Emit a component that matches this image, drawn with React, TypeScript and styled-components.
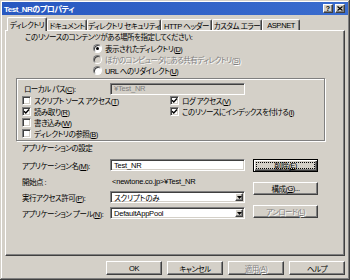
import React from 'react'
import styled, { createGlobalStyle, css } from 'styled-components'

const GlobalStyle = createGlobalStyle`
  html, body {
    margin: 0;
    padding: 0;
    background: #d4d0c8;
  }
  body {
    font-family: "Liberation Sans", "Noto Sans CJK JP", sans-serif;
    font-size: 7.5px;
    letter-spacing: -0.5px;
    font-feature-settings: "palt";
    font-variant-east-asian: proportional-width;
    color: #000;
  }
`

const tabs = [
	{ label: 'ディレクトリ', width: 40, active: true },
	{ label: 'ドキュメント', width: 40 },
	{ label: 'ディレクトリ セキュリティ', width: 74 },
	{ label: 'HTTP ヘッダー', width: 51 },
	{ label: 'カスタム エラー', width: 50 },
	{ label: 'ASP.NET', width: 38 },
]

const Key: React.FC<{ k: string }> = ({ k }) => (
	<>
		(<u>{k}</u>)
	</>
)

const CheckMark = () => (
	<svg width="7" height="7" viewBox="0 0 7 7">
		<path d="M1 3.2 L2.8 5 L6 1.6" stroke="#000" strokeWidth="1.4" fill="none" />
	</svg>
)

const Arrow = () => (
	<svg width="5" height="3" viewBox="0 0 5 3">
		<path d="M0 0 H5 L2.5 3 Z" fill="#000" />
	</svg>
)

const App: React.FC = () => {
	return (
		<>
			<GlobalStyle />
			<Window>
				<TitleBar>
					<Title>Test_NRのプロパティ</Title>
					<CaptionButton>?</CaptionButton>
					<CaptionButton>
						<svg width="6" height="5" viewBox="0 0 6 5">
							<path d="M0.5 0.5 L5.5 4.5 M5.5 0.5 L0.5 4.5" stroke="#000" strokeWidth="1.2" />
						</svg>
					</CaptionButton>
				</TitleBar>

				<Body>
					<TabStrip>
						{tabs.map((t) => (
							<Tab key={t.label} $width={t.width} $active={!!t.active}>
								{t.label}
							</Tab>
						))}
					</TabStrip>

					<Panel>
						<Prompt>このリソースのコンテンツがある場所を指定してください:</Prompt>
						<RadioList>
							<RadioRow>
								<Radio $checked />
								<span>
									表示されたディレクトリ<Key k="D" />
								</span>
							</RadioRow>
							<RadioRow $disabled>
								<Radio $disabled />
								<span>
									ほかのコンピュータにある共有ディレクトリ<Key k="S" />
								</span>
							</RadioRow>
							<RadioRow>
								<Radio />
								<span>
									URL へのリダイレクト<Key k="U" />
								</span>
							</RadioRow>
						</RadioList>

						<GroupBox>
							<PathRow>
								<PathLabel>
									ローカル パス<Key k="C" />:
								</PathLabel>
								<Field $disabled>¥Test_NR</Field>
							</PathRow>
							<CheckGrid>
								<CheckItem>
									<CheckBox />
									<span>
										スクリプト ソース アクセス<Key k="T" />
									</span>
								</CheckItem>
								<CheckItem>
									<CheckBox>
										<CheckMark />
									</CheckBox>
									<span>
										読み取り<Key k="R" />
									</span>
								</CheckItem>
								<CheckItem>
									<CheckBox />
									<span>
										書き込み<Key k="W" />
									</span>
								</CheckItem>
								<CheckItem>
									<CheckBox />
									<span>
										ディレクトリの参照<Key k="B" />
									</span>
								</CheckItem>
								<CheckItem>
									<CheckBox>
										<CheckMark />
									</CheckBox>
									<span>
										ログ アクセス<Key k="V" />
									</span>
								</CheckItem>
								<CheckItem>
									<CheckBox>
										<CheckMark />
									</CheckBox>
									<span>
										このリソースにインデックスを付ける<Key k="I" />
									</span>
								</CheckItem>
							</CheckGrid>
						</GroupBox>

						<SectionTitle>アプリケーションの設定</SectionTitle>

						<AppSection>
							<AppRows>
								<AppRow>
									<AppLabel>
										アプリケーション名<Key k="M" />:
									</AppLabel>
									<Field>Test_NR</Field>
								</AppRow>
								<AppRow>
									<AppLabel>開始点 :</AppLabel>
									<StaticText>&lt;newtone.co.jp&gt;¥Test_NR</StaticText>
								</AppRow>
								<AppRow>
									<AppLabel>
										実行アクセス許可<Key k="P" />:
									</AppLabel>
									<Field>
										<FieldText>スクリプトのみ</FieldText>
										<DropButton>
											<Arrow />
										</DropButton>
									</Field>
								</AppRow>
								<AppRow>
									<AppLabel>
										アプリケーション プール<Key k="N" />:
									</AppLabel>
									<Field>
										<FieldText>DefaultAppPool</FieldText>
										<DropButton>
											<Arrow />
										</DropButton>
									</Field>
								</AppRow>
							</AppRows>
							<SideButtons>
								<Button $w={65} $default>
									<FocusRing>
										削除<Key k="E" />
									</FocusRing>
								</Button>
								<Button $w={65}>
									構成<Key k="G" />...
								</Button>
								<Button $w={65} disabled>
									アンロード<Key k="L" />
								</Button>
							</SideButtons>
						</AppSection>
					</Panel>

					<ButtonBar>
						<Button $w={56} $h={14}>OK</Button>
						<Button $w={56} $h={14}>キャンセル</Button>
						<Button $w={56} $h={14} disabled>
							適用<Key k="A" />
						</Button>
						<Button $w={56} $h={14}>ヘルプ</Button>
					</ButtonBar>
				</Body>
			</Window>
		</>
	)
}

const raised = css`
	border: 1px solid;
	border-color: #fff #404040 #404040 #fff;
	box-shadow: inset -1px -1px #808080;
`

const sunken = css`
	border: 1px solid;
	border-color: #808080 #fff #fff #808080;
	box-shadow: inset 1px 1px #404040, inset -1px -1px #d4d0c8;
`

const disabledText = css`
	color: #808080;
	text-shadow: 1px 1px #fff;
`

const Window = styled.div`
	width: 350px;
	height: 280px;
	box-sizing: border-box;
	padding: 2px;
	background: #d4d0c8;
	box-shadow: inset -1px -1px #404040, inset 1px 1px #d4d0c8, inset -2px -2px #808080, inset 2px 2px #fff;
	display: flex;
	flex-direction: column;
`

const TitleBar = styled.div`
	height: 13px;
	flex: none;
	display: flex;
	align-items: center;
	gap: 2px;
	padding: 0 3px 0 2px;
	background: linear-gradient(to right, #2858c0, #3a6cce);
`

const Title = styled.div`
	flex: 1;
	color: #fff;
	font-weight: bold;
	font-size: 8px;
	white-space: nowrap;
`

const CaptionButton = styled.div`
	width: 10px;
	height: 9px;
	box-sizing: border-box;
	background: #d4d0c8;
	${raised};
	display: flex;
	align-items: center;
	justify-content: center;
	font-size: 7px;
	font-weight: bold;
	line-height: 1;
	letter-spacing: 0;
`

const Body = styled.div`
	display: flex;
	flex-direction: column;
	padding: 0 3px 0 3px;
`

const TabStrip = styled.div`
	margin-top: 2px;
	height: 13px;
	display: flex;
	align-items: flex-end;
	padding-left: 2px;
`

const Tab = styled.div<{ $width: number; $active: boolean }>`
	width: ${(p) => p.$width}px;
	height: ${(p) => (p.$active ? 14 : 11)}px;
	box-sizing: border-box;
	flex: none;
	overflow: hidden;
	background: #d4d0c8;
	border-left: 1px solid #fff;
	border-top: 1px solid #fff;
	border-right: 1px solid #404040;
	border-radius: 2px 2px 0 0;
	box-shadow: inset -1px 0 #808080;
	display: flex;
	align-items: center;
	justify-content: center;
	white-space: nowrap;
	padding-bottom: ${(p) => (p.$active ? 1 : 0)}px;
	${(p) =>
		p.$active &&
		css`
			margin-bottom: -1px;
			position: relative;
			z-index: 1;
		`}
`

const Panel = styled.div`
	height: 226px;
	box-sizing: border-box;
	${raised};
	padding: 1px 19px 0 10px;
	display: flex;
	flex-direction: column;
`

const Prompt = styled.div`
	height: 10px;
	line-height: 10px;
	margin: 1px 0 0 9px;
	white-space: nowrap;
`

const RadioList = styled.div`
	display: flex;
	flex-direction: column;
	padding-left: 77px;
`

const RadioRow = styled.div<{ $disabled?: boolean }>`
	height: 11px;
	display: flex;
	align-items: center;
	gap: 3px;
	white-space: nowrap;
	${(p) => p.$disabled && disabledText};
`

const Radio = styled.span<{ $checked?: boolean; $disabled?: boolean }>`
	width: 9px;
	height: 9px;
	box-sizing: border-box;
	flex: none;
	border-radius: 50%;
	border: 1px solid;
	border-color: #808080 #fff #fff #808080;
	box-shadow: inset 1px 1px #404040;
	background: ${(p) => (p.$disabled ? '#d4d0c8' : '#fff')};
	display: inline-flex;
	align-items: center;
	justify-content: center;
	${(p) =>
		p.$checked &&
		css`
			&::after {
				content: '';
				width: 3px;
				height: 3px;
				border-radius: 50%;
				background: #000;
			}
		`}
`

const GroupBox = styled.div`
	margin-top: 2px;
	height: 63px;
	box-sizing: border-box;
	border: 1px solid #808080;
	box-shadow: inset 1px 1px #fff, 1px 1px #fff;
	padding: 4px 0 0 5px;
	display: flex;
	flex-direction: column;
`

const PathRow = styled.div`
	height: 11px;
	display: flex;
	align-items: center;
	margin-bottom: 1px;
`

const PathLabel = styled.div`
	width: 86px;
	padding-left: 2px;
	white-space: nowrap;
`

const CheckGrid = styled.div`
	display: grid;
	grid-template-columns: 148px 1fr;
	grid-template-rows: repeat(4, 11px);
	grid-auto-flow: column;
`

const CheckItem = styled.div`
	display: flex;
	align-items: center;
	gap: 3px;
	white-space: nowrap;
`

const CheckBox = styled.span`
	width: 9px;
	height: 9px;
	box-sizing: border-box;
	flex: none;
	background: #fff;
	${sunken};
	display: inline-flex;
	align-items: center;
	justify-content: center;
`

const SectionTitle = styled.div`
	margin: 3px 0 0 6px;
	height: 10px;
	line-height: 10px;
`

const AppSection = styled.div`
	margin-top: 5px;
	display: flex;
	gap: 8px;
	padding-left: 6px;
`

const AppRows = styled.div`
	display: flex;
	flex-direction: column;
	gap: 4px;
`

const AppRow = styled.div`
	height: 12px;
	display: flex;
	align-items: center;
`

const AppLabel = styled.div`
	width: 88px;
	white-space: nowrap;
`

const Field = styled.div<{ $disabled?: boolean }>`
	width: 135px;
	height: 12px;
	box-sizing: border-box;
	background: ${(p) => (p.$disabled ? '#d4d0c8' : '#fff')};
	color: ${(p) => (p.$disabled ? '#808080' : '#000')};
	${sunken};
	padding: 0 1px 0 3px;
	display: flex;
	align-items: center;
	white-space: nowrap;
	letter-spacing: -0.2px;
`

const FieldText = styled.span`
	flex: 1;
`

const DropButton = styled.span`
	width: 8px;
	height: 8px;
	box-sizing: border-box;
	background: #d4d0c8;
	${raised};
	display: inline-flex;
	align-items: center;
	justify-content: center;
`

const StaticText = styled.div`
	padding-left: 2px;
	white-space: nowrap;
	letter-spacing: -0.2px;
`

const SideButtons = styled.div`
	display: flex;
	flex-direction: column;
	gap: 10px;
`

const Button = styled.button<{ $w: number; $h?: number; $default?: boolean }>`
	width: ${(p) => p.$w}px;
	height: ${(p) => p.$h ?? 13}px;
	box-sizing: border-box;
	padding: 0;
	font: inherit;
	letter-spacing: inherit;
	color: #000;
	background: #d4d0c8;
	${raised};
	display: flex;
	align-items: center;
	justify-content: center;
	white-space: nowrap;
	&:disabled {
		${disabledText};
	}
	${(p) =>
		p.$default &&
		css`
			border: 1px solid #000;
			box-shadow: inset 1px 1px #fff, inset -1px -1px #404040, inset -2px -2px #808080;
			padding: 2px;
		`}
`

const FocusRing = styled.span`
	flex: 1;
	align-self: stretch;
	border: 1px dotted #000;
	display: flex;
	align-items: center;
	justify-content: center;
`

const ButtonBar = styled.div`
	margin-top: 5px;
	display: flex;
	justify-content: flex-end;
	gap: 5px;
`

export default App
